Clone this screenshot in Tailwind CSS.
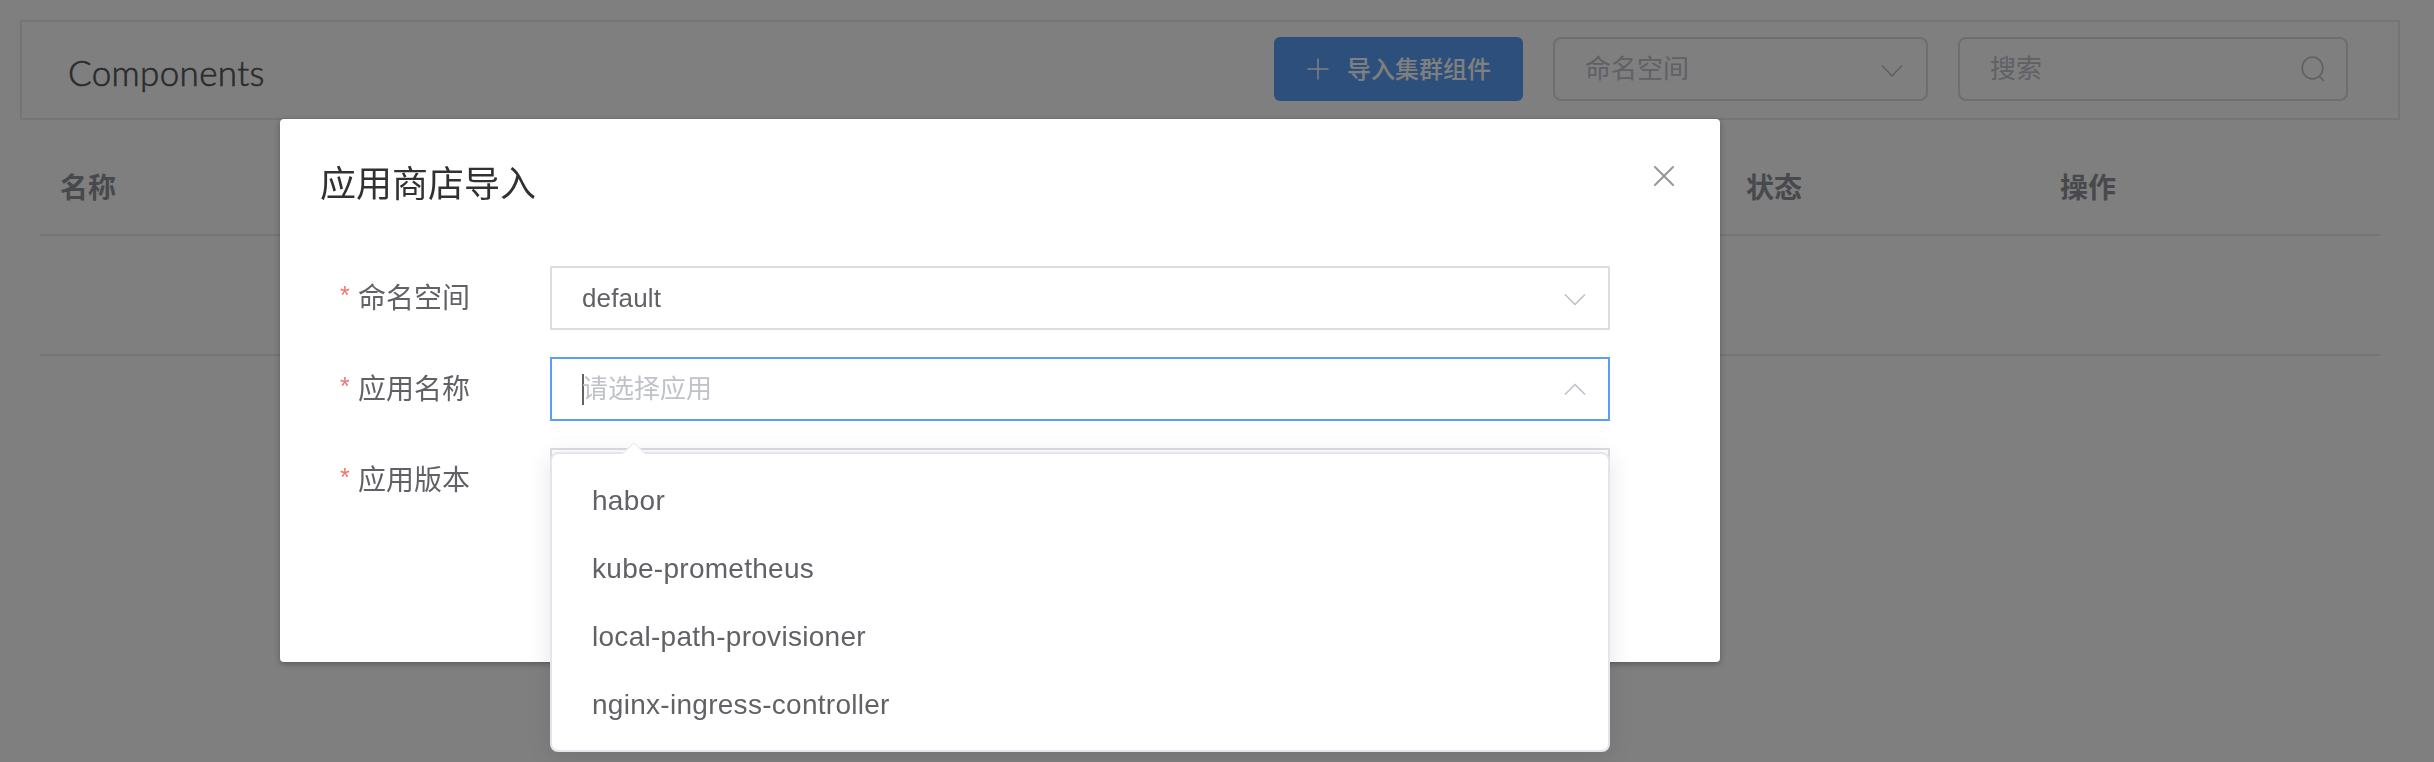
<!DOCTYPE html>
<html lang="zh-CN">
<head>
<meta charset="utf-8">
<title>Components</title>
<script src="https://cdn.jsdelivr.net/npm/@tailwindcss/browser@4"></script>
</head>
<body class="h-[762px] overflow-hidden bg-white font-['Liberation_Sans','Noto_Sans_CJK_SC',sans-serif] text-[#606266]">
<main class="px-5 pt-5">
  <header class="flex h-[100px] w-[2380px] items-start border-2 border-[#ebebf2] pl-[46px] pr-[50px] pt-[15px]">
    <h1 class="mt-[11px] flex-1 font-['Lato','Noto_Sans_CJK_SC',sans-serif] text-[35px] font-light leading-[48px] tracking-[0.35px] text-[#55585a] [-webkit-text-stroke:0.6px_#55585a]">Components</h1>
    <button class="flex h-16 w-[249px] items-center rounded-[6px] bg-[#599ff8] pl-[33px] text-white">
      <svg class="h-[22px] w-[22px]" viewBox="0 0 22 22" fill="none" stroke="currentColor" stroke-width="1.5" stroke-linecap="round"><path d="M11 1v20M1 11h20"/></svg>
      <span class="ml-[18px] translate-y-px text-2xl font-medium">导入集群组件</span>
    </button>
    <div class="ml-[30px] flex h-16 w-[375px] items-center justify-between rounded-lg border-2 border-[#dcdce3] pl-[30px] pr-[23px] text-[26px] text-[#c0c2ca]">
      <span>命名空间</span>
      <svg class="mt-1 h-3 w-[22px]" viewBox="0 0 22 12" fill="none" stroke="currentColor" stroke-width="1.7" stroke-linecap="round" stroke-linejoin="round"><path d="M1.500 1 11 11l9.500-10"/></svg>
    </div>
    <div class="ml-[30px] flex h-16 w-[390px] items-center justify-between rounded-lg border-2 border-[#dcdce3] pl-[30px] pr-[21px] text-[26px] text-[#c0c2ca]">
      <span>搜索</span>
      <svg class="h-[26px] w-6" viewBox="0 0 24 26" fill="none" stroke="currentColor" stroke-width="1.7" stroke-linecap="round"><ellipse cx="11.500" cy="12" rx="10.300" ry="11"/><path d="m19 21 3.500 3.500"/></svg>
    </div>
  </header>
  <section class="mx-5 w-[2340px] text-[28px] font-bold text-[#909399]">
    <div class="flex h-[116px] items-center border-b-2 border-[#ebebf2] pl-5 pt-[23px]">
      <span class="w-[1686px]">名称</span><span class="w-[314px]">状态</span><span>操作</span>
    </div>
    <div class="h-[120px] border-b-2 border-[#ebebf2]"></div>
  </section>
</main>

<div class="fixed inset-0 bg-black/50 pl-[280px] pt-[119px]">
  <section class="h-[543px] w-[1440px] rounded-[4px] bg-white shadow-[0_2px_6px_rgba(0,0,0,0.3)]">
    <div class="flex items-start justify-between pl-10 pr-[45px] pt-10">
      <h2 class="translate-y-[2px] text-[36px] leading-[48px] text-[#303133]">应用商店导入</h2>
      <svg class="mt-[6px] h-[22px] w-[22px] text-[#909399]" viewBox="0 0 22 22" fill="none" stroke="currentColor" stroke-width="1.9" stroke-linecap="round"><path d="m2 2 18 18M20 2 2 20"/></svg>
    </div>
    <div class="mt-[59px] flex flex-col gap-[27px] pl-[60px]">
      <div class="flex h-16">
        <label class="flex w-[210px] items-center text-[28px]"><span class="mb-1 mr-2 w-[10px] text-[25px] text-[#f07470]">*</span><span class="translate-y-px">命名空间</span></label>
        <div class="flex w-[1060px] items-center justify-between border-2 border-[#dcdce3] pl-[30px] pr-[22px] text-[26px]"><span class="tracking-[0.15px]">default</span>
          <svg class="mt-1 h-3 w-[22px] text-[#c0c2ca]" viewBox="0 0 22 12" fill="none" stroke="currentColor" stroke-width="1.7" stroke-linecap="round" stroke-linejoin="round"><path d="M1.500 1 11 10.500 20.500 1"/></svg>
        </div>
      </div>
      <div class="flex h-16">
        <label class="flex w-[210px] items-center text-[28px]"><span class="mb-1 mr-2 w-[10px] text-[25px] text-[#f07470]">*</span><span class="translate-y-px">应用名称</span></label>
        <div class="flex w-[1060px] items-center border-2 border-[#599ff8] pl-[30px] pr-[22px] text-[26px] text-[#c0c2ca]">
          <i class="-mr-[2px] h-[31px] w-[2px] bg-[#606266]"></i><span class="flex-1">请选择应用</span>
          <svg class="h-3 w-[22px]" viewBox="0 0 22 12" fill="none" stroke="currentColor" stroke-width="1.7" stroke-linecap="round" stroke-linejoin="round"><path d="M1.500 11 11 1.500 20.500 11"/></svg>
        </div>
      </div>
      <div class="flex h-16">
        <label class="flex w-[210px] items-center text-[28px]"><span class="mb-1 mr-2 w-[10px] text-[25px] text-[#f07470]">*</span><span class="translate-y-px">应用版本</span></label>
        <div class="w-[1060px] border-2 border-[#dcdce3]"></div>
      </div>
    </div>
  </section>
</div>

<div class="absolute left-[550px] top-[452px] h-[300px] w-[1060px] rounded-lg border-2 border-[#e4e5ec] bg-white py-[13px] shadow-[0_4px_24px_rgba(0,0,0,0.1)]">
  <svg class="absolute -top-3 left-[70px] h-3 w-6" viewBox="0 0 24 12"><path d="M0 12.500 12 1l12 11.500z" fill="#fff"/><path d="M2 10.500 12 1l10 9.500" fill="none" stroke="#ebeef5" stroke-width="1.500"/></svg>
  <ul class="pl-10 text-[28px] leading-[68px] tracking-[0.28px]">
    <li>habor</li><li>kube-prometheus</li><li>local-path-provisioner</li><li>nginx-ingress-controller</li>
  </ul>
</div>
</body>
</html>
